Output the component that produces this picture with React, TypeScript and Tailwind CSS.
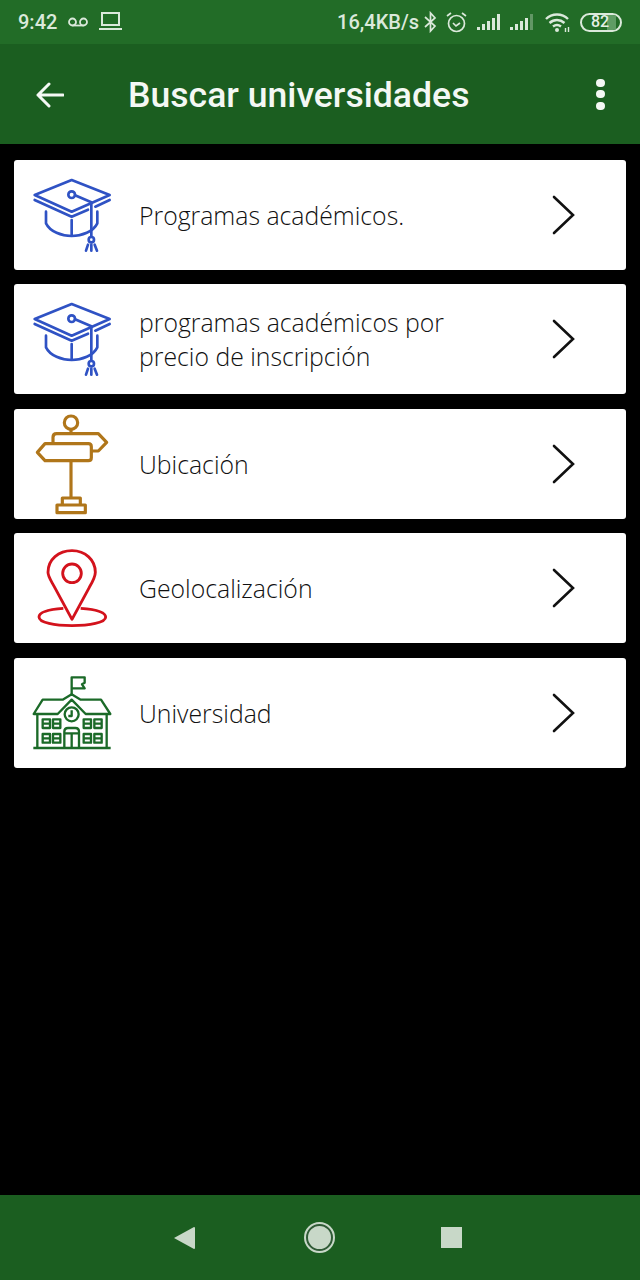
import React from "react";

function CapIcon() {
  return (
    <svg viewBox="0 -30 330 330" className="w-[110px] h-[110px] shrink-0" fill="none" stroke="#2f52c4" strokeWidth={8} strokeLinecap="round" strokeLinejoin="round">
      <path d="M155 30L269 75L155 125L44 75Z" />
      <path d="M44 90L155 140L204 119" />
      <path d="M269 90L226 110" />
      <path d="M78 125V160C90 185 125 198 155 198C185 198 220 185 232 160V125" />
      <path d="M155 150V196" />
      <circle cx={155} cy={74} r={10} />
      <path d="M165 76L214 97V200" />
      <circle cx={214} cy={209} r={8} />
      <path d="M204 224L198 242M214 224V242M224 224L231 242" />
    </svg>
  );
}

function SignIcon() {
  return (
    <svg viewBox="0 -3 330 330" className="w-[110px] h-[110px] shrink-0" fill="none" stroke="#b0761a" strokeWidth={9.5} strokeLinejoin="round">
      <circle cx={153} cy={38} r={20} />
      <path d="M153 58V71" />
      <path d="M99 100V82Q99 71 110 71H235L260 97L235 123H216" />
      <path d="M75 101H205Q214 101 214 110V143Q214 152 205 152H75L52 127Z" />
      <path d="M153 152V264" />
      <path d="M127 285V264H181V285" />
      <path d="M111 285H196V308H111Z" />
    </svg>
  );
}

function PinIcon() {
  return (
    <svg viewBox="0 -21 330 330" className="w-[110px] h-[110px] shrink-0" fill="none" stroke="#d3121c" strokeWidth={8.5} strokeLinejoin="round">
      <path d="M156 238L104 142C92 120 84 110 84 97C84 58 116 32 156 32C196 32 226 60 226 97C226 110 220 122 208 142Z" />
      <circle cx={156} cy={100} r={28} />
      <path d="M130 205C88 208 57 216 57 231C57 248 104 257 156 257C208 257 257 248 257 231C257 216 224 208 182 205" />
    </svg>
  );
}

function SchoolIcon() {
  return (
    <svg viewBox="0 -21 330 330" className="w-[110px] h-[110px] shrink-0" fill="none" stroke="#1b6a28" strokeWidth={7} strokeLinejoin="round">
      <path d="M155 88V37H194V53L186 58L194 70H155" />
      <path d="M41 147L68 104H128L155 88L182 104H243L271 147H197L155 104L113 147Z" />
      <path d="M52 147V248M260 147V248M40 249H272" />
      <circle cx={155} cy={148} r={21} />
      <path d="M155 136V153H145" />
      <path d="M133 248V200Q133 189 144 189H166Q177 189 177 200V248M133 205H177M155 205V248" />
      <path d="M68 163H90V189H68ZM68 176H90M99 163H121V189H99ZM99 176H121M191 163H213V189H191ZM191 176H213M223 163H245V189H223ZM223 176H245" />
      <path d="M68 207H90V233H68ZM68 220H90M99 207H121V233H99ZM99 220H121M191 207H213V233H191ZM191 220H213M223 207H245V233H223ZM223 220H245" />
    </svg>
  );
}

function Signal({ dim }: { dim?: boolean }) {
  return (
    <svg viewBox="0 0 25 17" className="w-[25px] h-[17px]" fill="#dbe9db">
      <rect x={0} y={13} width={3} height={3} />
      <rect x={5} y={10} width={3} height={6} />
      <rect x={10} y={7} width={3} height={9} />
      <rect x={15} y={4} width={3} height={12} />
      <rect x={20} y={0} width={3} height={16} opacity={dim ? 0.35 : 1} />
    </svg>
  );
}

function StatusBar() {
  return (
    <div className="h-[44px] bg-[#226c27] flex items-center text-[#dbe9db] font-['Roboto',sans-serif] font-medium text-[20px] pl-[18px] pr-[18px] shrink-0">
      <span>9:42</span>
      <svg viewBox="0 0 20 10" className="w-[20px] h-[10px] ml-[11px]" fill="none" stroke="#dbe9db" strokeWidth={1.8}>
        <circle cx={4.5} cy={5} r={3.5} />
        <circle cx={15.5} cy={5} r={3.5} />
        <path d="M4.5 8.5H15.5" />
      </svg>
      <svg viewBox="0 0 23 18" className="w-[23px] h-[18px] ml-[11px] -mt-[2px]" fill="none" stroke="#dbe9db" strokeWidth={2}>
        <path d="M3 1H20V13H3Z" />
        <path d="M0 17H23" />
      </svg>
      <span className="ml-auto">16,4KB/s</span>
      <svg viewBox="0 0 13 22" className="w-[13px] h-[22px] ml-[5px]" fill="none" stroke="#dbe9db" strokeWidth={1.7}>
        <path d="M1 6L11 15L6.5 20V2L11 7L1 16" />
      </svg>
      <svg viewBox="0 0 21 21" className="w-[21px] h-[21px] ml-[9px]" fill="none" stroke="#dbe9db" strokeWidth={1.7}>
        <circle cx={10.5} cy={11.5} r={8} />
        <path d="M1 4L5 1M20 4L16 1M7 11L10 14L14 11" />
      </svg>
      <div className="ml-[10px]"><Signal /></div>
      <div className="ml-[8px]"><Signal dim /></div>
      <svg viewBox="0 0 25 19" className="w-[25px] h-[19px] ml-[10px]" fill="none" stroke="#dbe9db" strokeWidth={2.4}>
        <path d="M1 6C7 0 17 0 23 6M4.5 10C9 6 15 6 19.5 10M8 13.5C10.5 11.5 13.5 11.5 16 13.5" />
        <circle cx={12} cy={17} r={2} fill="#dbe9db" stroke="none" />
        <path d="M20.5 15V19M23.5 14V19" strokeWidth={1.4} />
      </svg>
      <div className="ml-[10px] w-[42px] h-[19px] rounded-full border-[2px] border-[#dbe9db] relative overflow-hidden flex items-center justify-center">
        <div className="absolute left-[67%] top-0 bottom-0 w-[22%] bg-[#5f9c64]" />
        <span className="relative -translate-x-px text-[16px] leading-none text-[#e6f0e6]">82</span>
      </div>
    </div>
  );
}

function AppBar() {
  return (
    <div className="h-[100px] bg-[#1b5e20] flex items-center shrink-0 text-white">
      <svg viewBox="0 0 28 26" className="w-[28px] h-[26px] ml-[36px] mt-[1px]" fill="none" stroke="#f4f8f4" strokeWidth={3} strokeLinecap="round" strokeLinejoin="round">
        <path d="M27 13H2M13 2L2 13L13 24" />
      </svg>
      <span className="ml-[64px] mt-[4px] font-['Roboto',sans-serif] font-medium text-[35.6px] leading-none text-[#f4f8f4] whitespace-nowrap">Buscar universidades</span>
      <div className="ml-auto mr-[35px] flex flex-col gap-[3.5px]">
        <div className="w-[9px] h-[8px] rounded-full bg-[#f4f8f4]" />
        <div className="w-[9px] h-[8px] rounded-full bg-[#f4f8f4]" />
        <div className="w-[9px] h-[8px] rounded-full bg-[#f4f8f4]" />
      </div>
    </div>
  );
}

function Row({ icon, children }: { icon: React.ReactNode; children: React.ReactNode }) {
  return (
    <div className="h-[110px] bg-white rounded-[3px] flex items-center pl-[6px]">
      {icon}
      <div className="ml-[9px] font-['Open_Sans',sans-serif] font-light text-[24.8px] leading-[34px] text-[#111111]">{children}</div>
      <svg viewBox="0 0 24 40" className="w-[24px] h-[40px] ml-auto mr-[50px]" fill="none" stroke="#111111" strokeWidth={2.6} strokeLinecap="round">
        <path d="M2 2L21 20L2 38" />
      </svg>
    </div>
  );
}

export default function App() {
  return (
    <div className="w-[640px] h-[1280px] bg-black flex flex-col">
      <StatusBar />
      <AppBar />
      <div className="flex-1 px-[14px] pt-[16px] flex flex-col gap-[14.4px]">
        <Row icon={<CapIcon />}>Programas académicos.</Row>
        <Row icon={<CapIcon />}>programas académicos por<br />precio de inscripción</Row>
        <Row icon={<SignIcon />}>Ubicación</Row>
        <Row icon={<PinIcon />}>Geolocalización</Row>
        <Row icon={<SchoolIcon />}>Universidad</Row>
      </div>
      <div className="h-[85px] bg-[#1b5e20] flex items-center pl-[174px] shrink-0">
        <svg viewBox="0 0 21 24" className="w-[21px] h-[24px]" fill="#c8d8c8">
          <path d="M20 1Q21 1 21 2V22Q21 23 20 23L0 12Z" />
        </svg>
        <div className="ml-[109px] w-[31px] h-[31px] rounded-full bg-[#c8d8c8] border-[2px] border-[#c8d8c8] flex items-center justify-center">
          <div className="w-full h-full rounded-full border-[2px] border-[#2f5a35]" />
        </div>
        <div className="ml-[106px] w-[21px] h-[21px] bg-[#c8d8c8]" />
      </div>
    </div>
  );
}
